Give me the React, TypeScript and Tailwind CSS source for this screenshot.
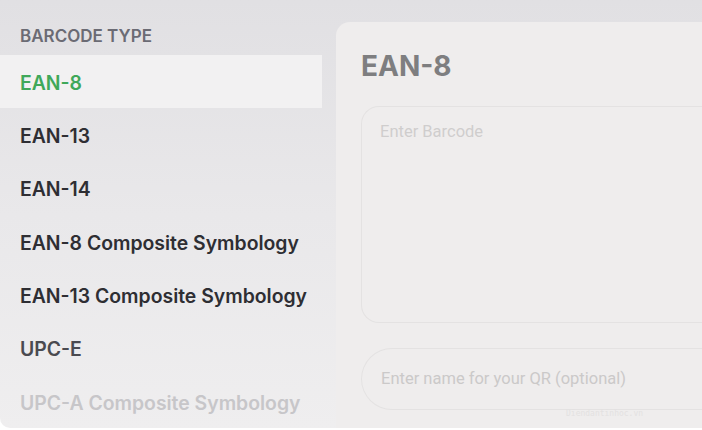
const barcodeTypes = [
  { label: "EAN-8", tone: "text-[#3fa85a]" },
  { label: "EAN-13", tone: "text-[#2e2e33]" },
  { label: "EAN-14", tone: "text-[#2e2e33]" },
  { label: "EAN-8 Composite Symbology", tone: "text-[#2e2e33]" },
  { label: "EAN-13 Composite Symbology", tone: "text-[#2e2e33]" },
  { label: "UPC-E", tone: "text-[#4a4a50]" },
  { label: "UPC-A Composite Symbology", tone: "text-[#c7c6c9]" },
];

function TypeList({ active }: { active: string }) {
  return (
    <aside className="w-[336px] shrink-0 pt-[26px]">
      <h2 className="pl-5 text-[17px] leading-5 font-semibold text-[#6b6b74]">BARCODE TYPE</h2>
      <ul className="mt-[9px]">
        {barcodeTypes.map((t) => (
          <li
            key={t.label}
            className={`flex h-[53.33px] w-[322px] items-center pl-5 pt-[3px] text-[19.4px] font-semibold ${t.tone} ${
              t.label === active ? "bg-[#f2f1f2]" : ""
            }`}
          >
            {t.label}
          </li>
        ))}
      </ul>
    </aside>
  );
}

function Editor({ title }: { title: string }) {
  return (
    <section className="mt-[22px] flex-1 rounded-tl-[14px] bg-[#efeded] pl-[25px] pt-[26px]">
      <h1 className="text-[28px] leading-9 font-bold text-[#7e7e80]">{title}</h1>
      <div className="mt-[22px] h-[217px] rounded-l-[18px] border border-r-0 border-[#e4e2e2] pl-[18px] pt-[12px]">
        <span className="font-['Roboto',sans-serif] text-[16.5px] text-[#cfcdcd]">Enter Barcode</span>
      </div>
      <div className="relative mt-[25px] flex h-[62px] items-center rounded-l-full border border-r-0 border-[#e4e2e2] pl-[19px]">
        <span className="font-['Roboto',sans-serif] text-[16.5px] text-[#cbc9c9]">
          Enter name for your QR (optional)
        </span>
        <span className="absolute left-[204px] top-[59px] font-['DejaVu_Sans_Mono',monospace] text-[8px] text-[#e3e1e1]">
          Diendantinhoc.vn
        </span>
      </div>
    </section>
  );
}

export default function App() {
  return (
    <div className="h-[430px] w-[702px] overflow-hidden bg-white font-['Inter',sans-serif]">
      <div className="flex h-[428px] rounded-b-[10px] bg-gradient-to-b from-[#e1e0e3] via-[#e9e8ea] to-[#efeeef]">
        <TypeList active="EAN-8" />
        <Editor title="EAN-8" />
      </div>
    </div>
  );
}
